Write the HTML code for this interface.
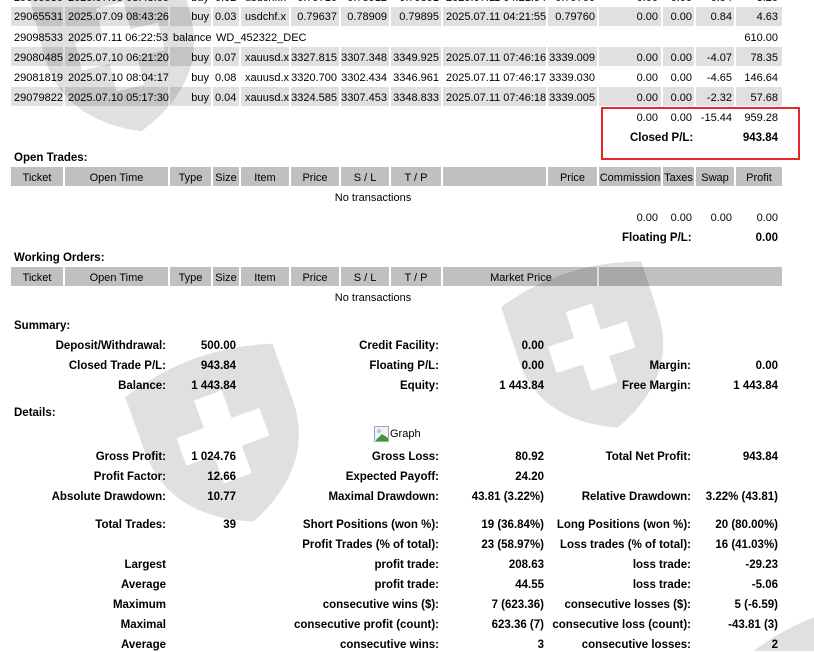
<!DOCTYPE html>
<html><head><meta charset="utf-8"><style>
body{margin:0;width:814px;height:651px;overflow:hidden;background:#fff;position:relative;font-family:"Liberation Sans","DejaVu Sans",sans-serif;font-size:11px;color:#000}
.c{position:absolute;height:19px;}
.g{background:#e0e0e0}
.h{background:#c0c0c0}
.t{position:absolute;line-height:14px;white-space:nowrap}
.b{font-weight:bold;font-size:11.5px}
</style></head><body>
<div id="bg"></div>
<script>
var cols=[[11,63],[65,168],[170,211],[213,239],[241,289],[291,339],[341,389],[391,441],[443,546],[548,597],[599,661],[663,694],[696,734],[736,782]];
var h='';
function cells(y,cls){cols.forEach(function(c){h+='<div class="c '+cls+'" style="left:'+c[0]+'px;top:'+y+'px;width:'+(c[1]-c[0])+'px"></div>';});}
[7,47,87].forEach(function(y){cells(y,'g');});
cells(167,'h');
[[11,63],[65,168],[170,211],[213,239],[241,289],[291,339],[341,389],[391,441],[443,597],[599,782]].forEach(function(c){h+='<div class="c h" style="left:'+c[0]+'px;top:267px;width:'+(c[1]-c[0])+'px"></div>';});
function T(txt,x,y,o){o=o||'';y+=1;var s='top:'+(y-7)+'px;';if(o.indexOf('R')>=0)s+='right:'+(814-x)+'px;';else if(o.indexOf('C')>=0)s+='left:'+(x-100)+'px;width:200px;text-align:center;';else s+='left:'+x+'px;';h+='<div class="t'+(o.indexOf('B')>=0?' b':'')+'" style="'+s+'">'+txt+'</div>';}
var rows=[
[-3,'29065530','2025.07.09 08:43:00','buy','0.02','usdchf.x','0.79716','0.78912','0.79891','2025.07.11 04:21:54','0.79760','0.00','0.00','0.54','3.20'],
[16,'29065531','2025.07.09 08:43:26','buy','0.03','usdchf.x','0.79637','0.78909','0.79895','2025.07.11 04:21:55','0.79760','0.00','0.00','0.84','4.63'],
[57,'29080485','2025.07.10 06:21:20','buy','0.07','xauusd.x','3327.815','3307.348','3349.925','2025.07.11 07:46:16','3339.009','0.00','0.00','-4.07','78.35'],
[77,'29081819','2025.07.10 08:04:17','buy','0.08','xauusd.x','3320.700','3302.434','3346.961','2025.07.11 07:46:17','3339.030','0.00','0.00','-4.65','146.64'],
[97,'29079822','2025.07.10 05:17:30','buy','0.04','xauusd.x','3324.585','3307.453','3348.833','2025.07.11 07:46:18','3339.005','0.00','0.00','-2.32','57.68']];
rows.forEach(function(r){var y=r[0];T(r[1],14,y);T(r[2],68,y);T(r[3],209,y,'R');T(r[4],215,y);T(r[5],245,y);T(r[6],337,y,'R');T(r[7],387,y,'R');T(r[8],439,y,'R');T(r[9],446,y);T(r[10],595,y,'R');T(r[11],658,y,'R');T(r[12],692,y,'R');T(r[13],732,y,'R');T(r[14],778,y,'R');});
T('29098533',14,37);T('2025.07.11 06:22:53',68,37);T('balance',173,37);T('WD_452322_DEC',216,37);T('610.00',778,37,'R');
T('0.00',658,117,'R');T('0.00',692,117,'R');T('-15.44',732,117,'R');T('959.28',778,117,'R');
T('Closed P/L:',630,137,'B');T('943.84',778,137,'RB');
T('Open Trades:',14,157,'B');
var hd=['Ticket','Open Time','Type','Size','Item','Price','S / L','T / P','','Price','Commission','Taxes','Swap','Profit'];
hd.forEach(function(t,i){if(t)T(t,(cols[i][0]+cols[i][1])/2,177,'C');});
T('No transactions',373,197,'C');
T('0.00',658,217,'R');T('0.00',692,217,'R');T('0.00',732,217,'R');T('0.00',778,217,'R');
T('Floating P/L:',622,237,'B');T('0.00',778,237,'RB');
T('Working Orders:',14,257,'B');
hd.slice(0,8).forEach(function(t,i){T(t,(cols[i][0]+cols[i][1])/2,277,'C');});T('Market Price',521,277,'C');
T('No transactions',373,297,'C');
T('Summary:',14,325,'B');
function R3(y,a,b,c,d,e,f){if(a)T(a,166,y,'RB');if(b)T(b,236,y,'RB');if(c)T(c,439,y,'RB');if(d)T(d,544,y,'RB');if(e)T(e,691,y,'RB');if(f)T(f,778,y,'RB');}
R3(345,'Deposit/Withdrawal:','500.00','Credit Facility:','0.00');
R3(365,'Closed Trade P/L:','943.84','Floating P/L:','0.00','Margin:','0.00');
R3(385,'Balance:','1 443.84','Equity:','1 443.84','Free Margin:','1 443.84');
T('Details:',14,412,'B');
T('Graph',390,433);
R3(456,'Gross Profit:','1 024.76','Gross Loss:','80.92','Total Net Profit:','943.84');
R3(476,'Profit Factor:','12.66','Expected Payoff:','24.20');
R3(496,'Absolute Drawdown:','10.77','Maximal Drawdown:','43.81 (3.22%)','Relative Drawdown:','3.22% (43.81)');
R3(524,'Total Trades:','39','Short Positions (won %):','19 (36.84%)','Long Positions (won %):','20 (80.00%)');
R3(544,'','','Profit Trades (% of total):','23 (58.97%)','Loss trades (% of total):','16 (41.03%)');
R3(564,'Largest','','profit trade:','208.63','loss trade:','-29.23');
R3(584,'Average','','profit trade:','44.55','loss trade:','-5.06');
R3(604,'Maximum','','consecutive wins ($):','7 (623.36)','consecutive losses ($):','5 (-6.59)');
R3(624,'Maximal','','consecutive profit (count):','623.36 (7)','consecutive loss (count):','-43.81 (3)');
R3(644,'Average','','consecutive wins:','3','consecutive losses:','2');
document.getElementById('bg').outerHTML=h;
</script>
<div style="position:absolute;left:601px;top:107px;width:195px;height:49px;border:2px solid #e8262a"></div>
<svg style="position:absolute;left:374px;top:426px" width="16" height="16"><rect x="0.5" y="0.5" width="14" height="15" fill="#eef2f6" stroke="#9aa8b8"/><path d="M2 14 L8 8 L14 12 L14 15 L2 15Z" fill="#3a9a3a"/><circle cx="5" cy="5" r="2" fill="#b8c8d8"/></svg>
<svg style="position:absolute;left:0;top:0" width="814" height="651">
<defs><path id="sh" fill-rule="evenodd" d="M0,18 Q80,-8 160,18 L160,80 Q158,150 80,182 Q2,150 0,80 Z M65,45 L95,45 L95,75 L125,75 L125,105 L95,105 L95,135 L65,135 L65,105 L35,105 L35,75 L65,75 Z"/></defs>
<g fill="rgba(0,0,0,0.12)">
<use href="#sh" transform="translate(45,-40) rotate(-14 80 90) scale(0.95)"/>
<use href="#sh" transform="translate(145,348) rotate(-20 80 90) scale(0.98)"/>
<use href="#sh" transform="translate(520,262) rotate(-18 80 90) scale(0.92)"/>
<use href="#sh" transform="translate(770,605) rotate(-20 80 90) scale(0.95)"/>
</g></svg>
</body></html>
